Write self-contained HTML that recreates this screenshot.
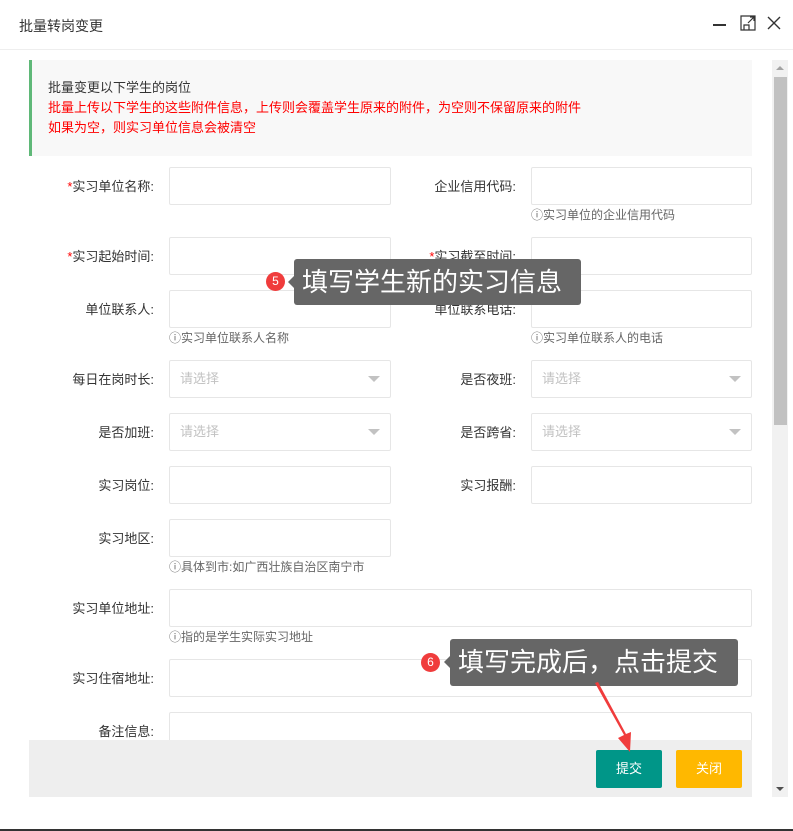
<!DOCTYPE html>
<html><head><meta charset="utf-8"><style>
*{box-sizing:border-box;margin:0;padding:0}
body{width:793px;height:831px;background:#fff;position:relative;overflow:hidden;font-family:"Liberation Sans","Noto Sans CJK SC",sans-serif;font-size:13px;color:#333}
.a{position:absolute}
.inp{position:absolute;height:38px;border:1px solid #e6e6e6;background:#fff;border-radius:2px}
.lb{position:absolute;width:130px;text-align:right;font-size:13px;color:#333;line-height:16px}
.lb i{color:#f00;font-style:normal}
.hint{position:absolute;font-size:12px;color:#666;line-height:14px}
.sel{color:#c2c2c2;padding-left:10px;line-height:36px}
.sel:after{content:"";position:absolute;right:10px;top:15px;border:6px solid transparent;border-top-color:#c2c2c2}
.tip{position:absolute;background:#666;color:#fff;font-size:26px;line-height:46px;padding-left:8px;border-radius:3px}
.tip:before{content:"";position:absolute;left:-6px;top:17px;border:6px solid transparent;border-left:0;border-right-color:#666}
.bdg{position:absolute;width:19px;height:19px;border-radius:50%;background:#f03c3c;color:#fff;font-size:12px;line-height:19px;text-align:center}
</style></head><body>
<div class="a" style="left:19px;top:16px;font-size:14px;color:#333">批量转岗变更</div>
<div class="a" style="left:713px;top:24px;width:13px;height:2px;background:#333"></div>
<svg class="a" style="left:740px;top:15px" width="16" height="16" viewBox="0 0 16 16" fill="none" stroke="#333" stroke-width="1.2"><path d="M1 1h14v14H1zM4 15v-5h5v5M8 8l6-6M10 2h4v4"/></svg>
<svg class="a" style="left:767px;top:16px" width="14" height="14" viewBox="0 0 14 14" stroke="#333" stroke-width="1.4"><path d="M1 1l12 12M13 1L1 13"/></svg>
<div class="a" style="left:0;top:49px;width:793px;height:1px;background:#eee"></div>

<div class="a" style="left:29px;top:60px;width:723px;height:96px;background:#f8f8f8;border-left:3px solid #5fb878"></div>
<div class="a" style="left:48px;top:78px;font-size:13px;color:#333;line-height:20px">批量变更以下学生的岗位<br><span style="color:#f00">批量上传以下学生的这些附件信息，上传则会覆盖学生原来的附件，为空则不保留原来的附件<br>如果为空，则实习单位信息会被清空</span></div>

<div class="lb" style="left:24px;top:179px"><i>*</i>实习单位名称:</div><div class="inp" style="left:169px;top:167px;width:222px"></div>
<div class="lb" style="left:386px;top:179px">企业信用代码:</div><div class="inp" style="left:531px;top:167px;width:221px"></div>
<div class="hint" style="left:531px;top:208px">ⓘ实习单位的企业信用代码</div>

<div class="lb" style="left:24px;top:249px"><i>*</i>实习起始时间:</div><div class="inp" style="left:169px;top:237px;width:222px"></div>
<div class="lb" style="left:386px;top:249px"><i>*</i>实习截至时间:</div><div class="inp" style="left:531px;top:237px;width:221px"></div>

<div class="lb" style="left:24px;top:302px">单位联系人:</div><div class="inp" style="left:169px;top:290px;width:222px"></div>
<div class="lb" style="left:386px;top:302px">单位联系电话:</div><div class="inp" style="left:531px;top:290px;width:221px"></div>
<div class="hint" style="left:169px;top:331px">ⓘ实习单位联系人名称</div>
<div class="hint" style="left:531px;top:331px">ⓘ实习单位联系人的电话</div>

<div class="lb" style="left:24px;top:372px">每日在岗时长:</div><div class="inp sel" style="left:169px;top:360px;width:222px">请选择</div>
<div class="lb" style="left:386px;top:372px">是否夜班:</div><div class="inp sel" style="left:531px;top:360px;width:221px">请选择</div>

<div class="lb" style="left:24px;top:425px">是否加班:</div><div class="inp sel" style="left:169px;top:413px;width:222px">请选择</div>
<div class="lb" style="left:386px;top:425px">是否跨省:</div><div class="inp sel" style="left:531px;top:413px;width:221px">请选择</div>

<div class="lb" style="left:24px;top:478px">实习岗位:</div><div class="inp" style="left:169px;top:466px;width:222px"></div>
<div class="lb" style="left:386px;top:478px">实习报酬:</div><div class="inp" style="left:531px;top:466px;width:221px"></div>

<div class="lb" style="left:24px;top:531px">实习地区:</div><div class="inp" style="left:169px;top:519px;width:222px"></div>
<div class="hint" style="left:169px;top:560px">ⓘ具体到市:如广西壮族自治区南宁市</div>

<div class="lb" style="left:24px;top:601px">实习单位地址:</div><div class="inp" style="left:169px;top:589px;width:583px"></div>
<div class="hint" style="left:169px;top:630px">ⓘ指的是学生实际实习地址</div>

<div class="lb" style="left:24px;top:671px">实习住宿地址:</div><div class="inp" style="left:169px;top:659px;width:583px"></div>
<div class="lb" style="left:24px;top:724px">备注信息:</div><div class="inp" style="left:169px;top:712px;width:583px"></div>

<div class="a" style="left:29px;top:740px;width:723px;height:57px;background:#eee"></div>
<div class="a" style="left:596px;top:750px;width:66px;height:38px;background:#009688;color:#fff;text-align:center;line-height:38px;border-radius:2px">提交</div>
<div class="a" style="left:676px;top:750px;width:66px;height:38px;background:#ffb800;color:#fff;text-align:center;line-height:38px;border-radius:2px">关闭</div>

<div class="a" style="left:772px;top:60px;width:16px;height:737px;background:#f1f1f1"></div>
<div class="a" style="left:774px;top:77px;width:13px;height:348px;background:#c1c1c1"></div>
<div class="a" style="left:776px;top:66px;border:4px solid transparent;border-bottom:4px solid #a3a3a3;border-top:0"></div>
<div class="a" style="left:776px;top:787px;border:4px solid transparent;border-top:4px solid #505050;border-bottom:0"></div>
<div class="a" style="left:0;top:829px;width:793px;height:2px;background:#333"></div>

<div class="bdg" style="left:266px;top:272px">5</div>
<div class="tip" style="left:294px;top:259px;width:287px;height:46px">填写学生新的实习信息</div>
<div class="bdg" style="left:421px;top:653px">6</div>
<div class="tip" style="left:450px;top:639px;width:288px;height:47px">填写完成后，点击提交</div>
<svg class="a" style="left:590px;top:680px" width="50" height="75"><path d="M5 3L34 55L28 58L40 72L41 52L36 54L8 2z" fill="#f03c3c"/></svg>
</body></html>
